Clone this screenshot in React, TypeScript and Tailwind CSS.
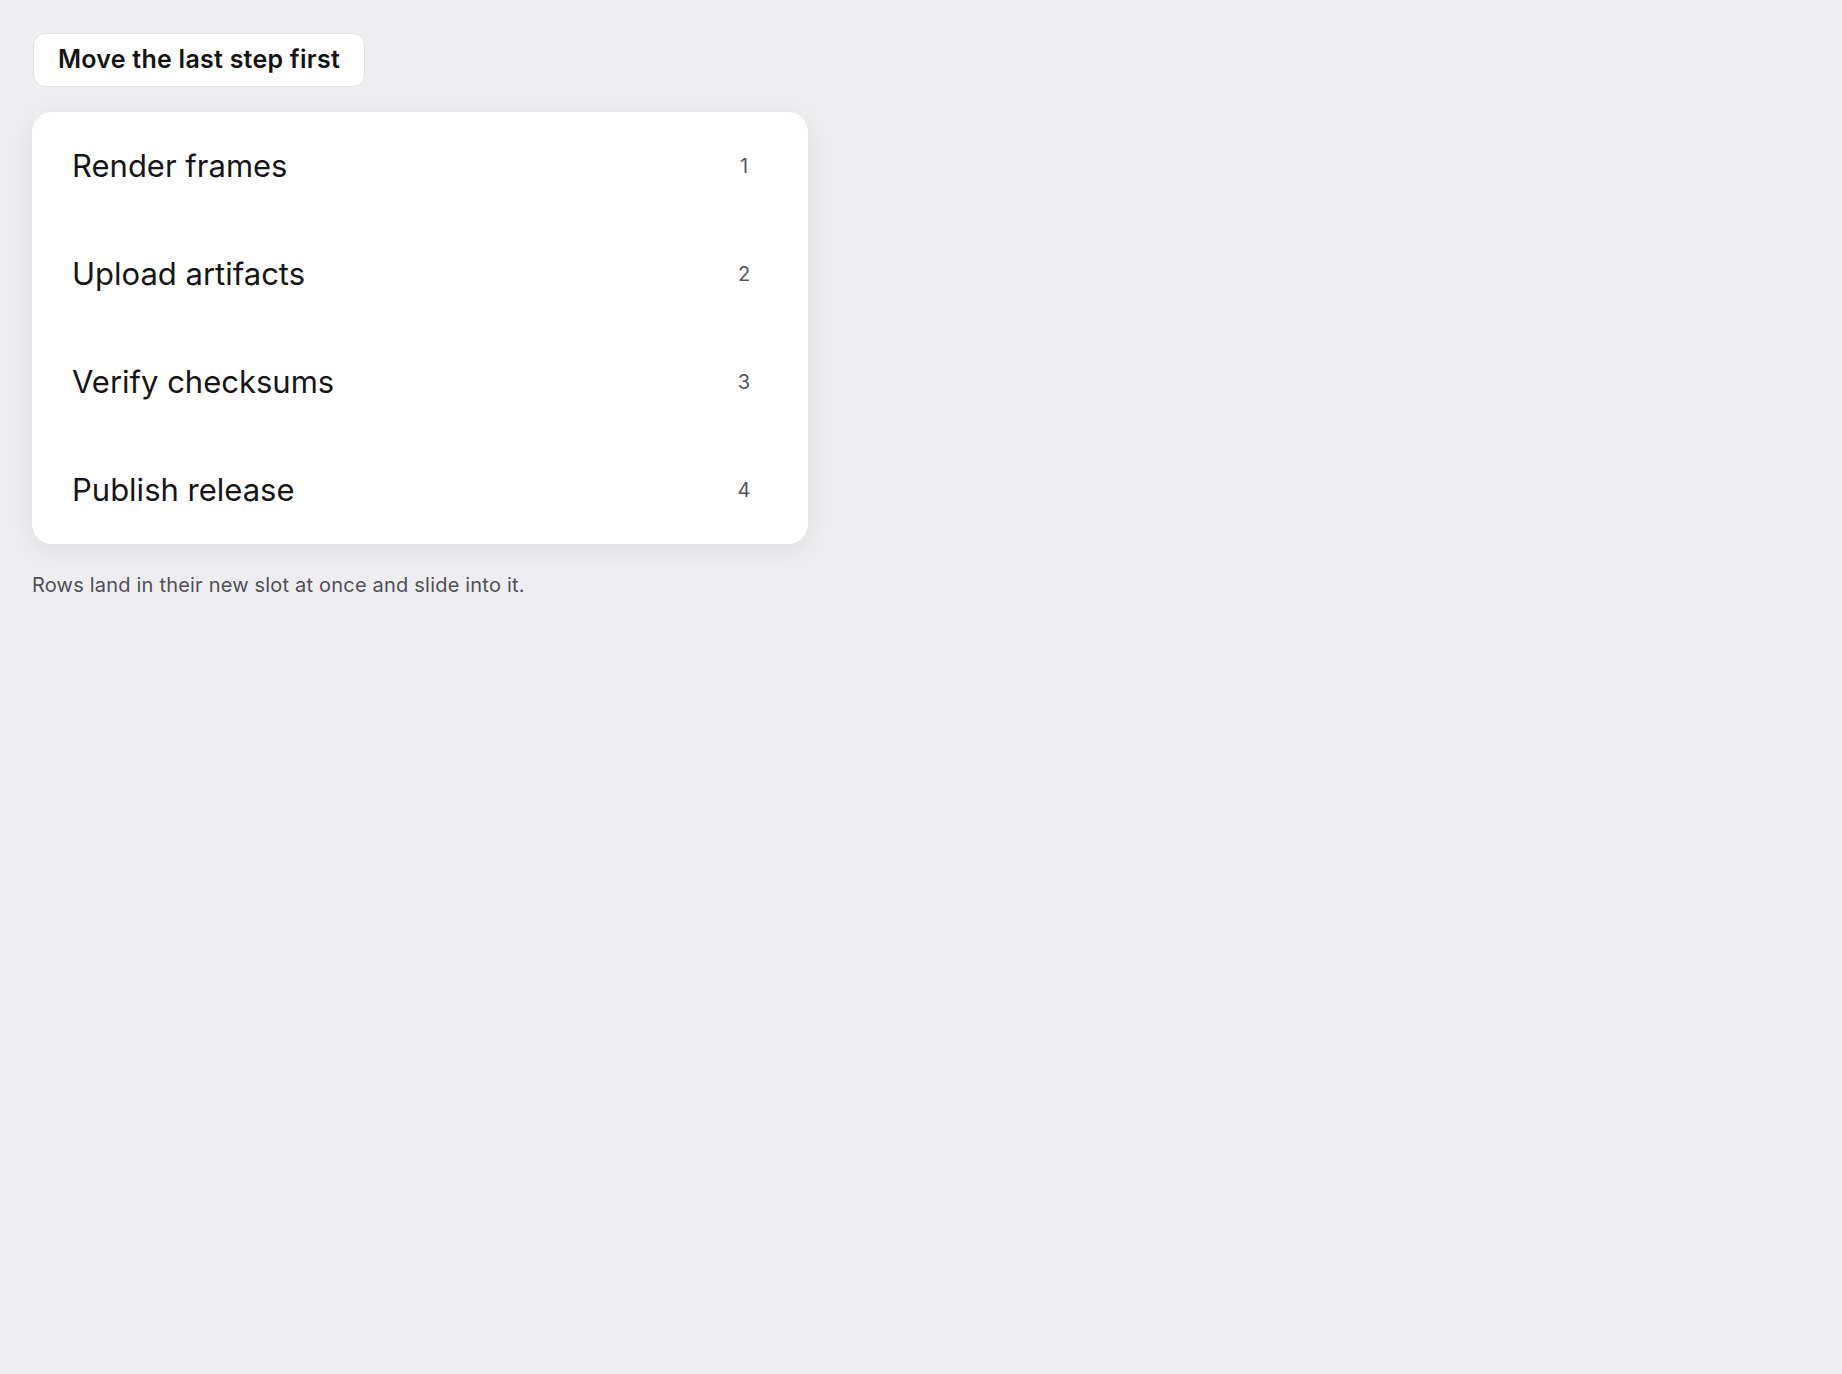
import React from "react";

const steps = ["Render frames", "Upload artifacts", "Verify checksums", "Publish release"];

export default function App() {
  return (
    <div
      className="min-h-screen bg-[#eeeef0] p-8 text-[#18181b]"
      style={{ fontFamily: "Inter, 'Noto Sans', sans-serif" }}
    >
      <button className="ml-[1px] mt-[1px] h-[54px] rounded-xl border border-[#e2e2e5] bg-white px-6 text-[25px] font-semibold tracking-[0.01em] text-[#141416]">
        Move the last step first
      </button>

      <ul className="mt-[25px] w-[776px] rounded-[20px] bg-white shadow-[0_6px_26px_rgba(0,0,0,0.07)]">
        {steps.map((step, i) => (
          <li key={step} className="flex h-[108px] items-center justify-between pl-10 pr-10">
            <span className="text-[31px] text-[#161618]">{step}</span>
            <span className="w-12 text-center text-[20px] text-[#55555c]">{i + 1}</span>
          </li>
        ))}
      </ul>

      <p className="mt-7 text-[20px] leading-[27px] tracking-[0.01em] text-[#4f4f57]">
        Rows land in their new slot at once and slide into it.
      </p>
    </div>
  );
}
